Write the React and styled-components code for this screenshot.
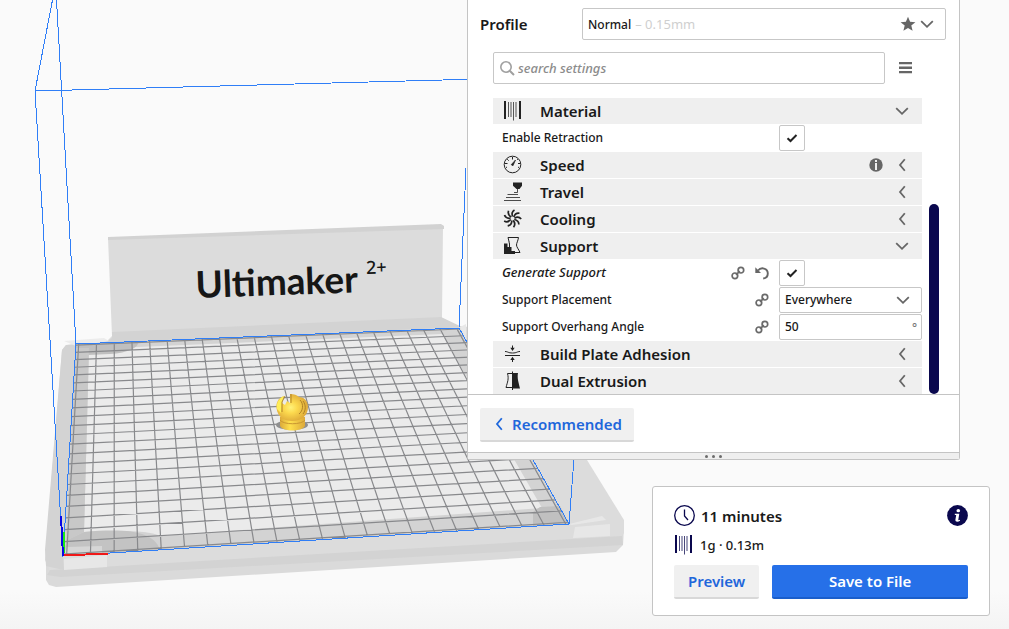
import React from "react";
import styled, { createGlobalStyle } from "styled-components";

const Global = createGlobalStyle`
  * { box-sizing: border-box; }
  html, body, #root { height: 100%; }
  body {
    margin: 0;
    font-family: "Noto Sans", "Open Sans", sans-serif;
    font-size: 12px;
    font-weight: 500;
    color: #191919;
  }
  button, input, select { font: inherit; color: inherit; margin: 0; }
`;

const Page = styled.main`
  position: relative;
  min-height: 100%;
  overflow: hidden;
  background: linear-gradient(#fafafa 0%, #fafafa 94%, #f4f4f4 100%);
`;

const SceneSvg = styled.svg`
  position: absolute;
  inset: 0;
  width: 100%;
  height: 100%;
`;

const Overlay = styled.div`
  position: relative;
  display: flex;
  flex-direction: column;
  align-items: flex-end;
  gap: 26px;
  padding: 0 19px 13px 0;
`;

const Panel = styled.section`
  width: 493px;
  max-width: 100%;
  margin-right: 30px;
  background: #fff;
  border: 1px solid #c4c4c4;
  border-top: 0;
  border-radius: 0 0 3px 3px;
`;

const ProfileRow = styled.div`
  display: flex;
  align-items: center;
  padding: 8px 13px 0 12px;
  font-size: 15px;
  font-weight: 600;
`;

const ProfileLabel = styled.span`
  width: 102px;
`;

const ProfileButton = styled.button`
  flex: 1;
  height: 32px;
  display: flex;
  align-items: center;
  gap: 4px;
  padding: 0 11px 0 5px;
  border: 1px solid #c7c7c7;
  border-radius: 2px;
  background: #fff;
  font-size: 12px;
  font-weight: 500;
`;

const Faint = styled.span`
  flex: 1;
  text-align: left;
  font-size: 13px;
  font-weight: 400;
  color: #cfcfcf;
`;

const SearchRow = styled.div`
  display: flex;
  align-items: center;
  gap: 14px;
  padding: 12px 47px 14px 25px;
`;

const SearchBox = styled.label`
  flex: 1;
  height: 32px;
  display: flex;
  align-items: center;
  gap: 3px;
  padding: 0 5px;
  border: 1px solid #c7c7c7;
  border-radius: 2px;
`;

const SearchInput = styled.input`
  flex: 1;
  min-width: 0;
  border: 0;
  padding: 0;
  outline: 0;
  background: none;
  font-size: 13px;
  font-style: italic;
  &::placeholder { color: #8c8c8c; opacity: 1; }
`;

const IconButton = styled.button`
  display: flex;
  padding: 0;
  border: 0;
  background: none;
`;

const ListArea = styled.div`
  display: flex;
  padding: 0 20px 0 25px;
  gap: 7px;
  border-bottom: 1px solid #c4c4c4;
`;

const Settings = styled.div`
  flex: 1;
  display: flex;
  flex-direction: column;
  gap: 1px;
`;

const ScrollThumb = styled.div`
  width: 10px;
  height: 190px;
  align-self: flex-end;
  border-radius: 5px;
  background: #0a084e;
`;

const CategoryButton = styled.button`
  height: 26px;
  display: flex;
  align-items: center;
  padding: 0 13px 0 10px;
  border: 0;
  background: #efefef;
  font-size: 15px;
  font-weight: 600;
  text-align: left;
`;

const CategoryIcon = styled.span`
  display: flex;
  width: 37px;
`;

const CategoryName = styled.span`
  flex: 1;
`;

const InfoMark = styled.span`
  display: flex;
  margin-right: 12px;
`;

const SettingRow = styled.div`
  height: 26px;
  display: flex;
  align-items: center;
  gap: 10px;
  padding-left: 9px;
`;

const SettingLabel = styled.label`
  flex: 1;
  padding-bottom: 2px;
  font-size: ${(p) => (p.$changed ? "13px" : "12px")};
  font-style: ${(p) => (p.$changed ? "italic" : "normal")};
`;

const Field = styled.span`
  width: 143px;
  height: 26px;
  display: grid;
  grid-template-columns: 1fr;
  align-items: center;
  > * { grid-area: 1 / 1; }
  > svg, > span { justify-self: end; margin-right: 12px; pointer-events: none; }
`;

const CheckField = styled(Field)`
  > svg { justify-self: start; margin: 0 0 0 6px; }
`;

const CheckInput = styled.input`
  appearance: none;
  width: 26px;
  height: 26px;
  border: 1px solid #c7c7c7;
  border-radius: 2px;
  background: #fff;
`;

const SelectInput = styled.select`
  appearance: none;
  width: 100%;
  height: 26px;
  padding: 0 5px 1px;
  border: 1px solid #c7c7c7;
  border-radius: 2px;
  background: #fff;
`;

const TextInput = styled.input`
  width: 100%;
  height: 26px;
  padding: 0 5px 2px;
  border: 1px solid #c7c7c7;
  border-radius: 2px;
  background: #fff;
`;

const Unit = styled.span`
  && { margin-right: 5px; }
  color: #777;
`;

const PanelFooter = styled.div`
  padding: 13px 12px 10px;
`;

const ActionButton = styled.button`
  height: 34px;
  display: flex;
  align-items: center;
  justify-content: center;
  gap: 6px;
  flex: ${(p) => (p.$grow ? "1" : "none")};
  padding: 0 ${(p) => (p.$icon ? "12px" : "14px")};
  border: 0;
  border-bottom: 2px solid ${(p) => (p.$primary ? "#1a5ecb" : "#d8d8d8")};
  border-radius: 2px;
  background: ${(p) => (p.$primary ? "#2670e8" : "#f0f0f0")};
  color: ${(p) => (p.$primary ? "#fff" : "#1f67db")};
  font-size: 15px;
  font-weight: 600;
`;

const DragHandle = styled.div`
  height: 7px;
  display: flex;
  align-items: center;
  justify-content: center;
  gap: 4px;
  border-top: 1px solid #c4c4c4;
  background: #efefef;
`;

const Dot = styled.i`
  width: 3px;
  height: 3px;
  border-radius: 50%;
  background: #6b6b6b;
`;

const JobCard = styled.section`
  width: 338px;
  max-width: 100%;
  height: 130px;
  padding: 18px 21px 0;
  border: 1px solid #c4c4c4;
  border-radius: 3px;
  background: #fff;
`;

const JobRow = styled.div`
  display: flex;
  align-items: center;
  gap: 6px;
  height: ${(p) => (p.$big ? "21px" : "20px")};
  margin-bottom: ${(p) => (p.$big ? "9px" : "10px")};
  font-size: ${(p) => (p.$big ? "15px" : "13px")};
  font-weight: ${(p) => (p.$big ? "600" : "500")};
`;

const JobText = styled.span`
  flex: 1;
`;

const Actions = styled.div`
  display: flex;
  gap: 13px;
`;

/* ---------- icons ---------- */

const Chevron = ({ dir = "down", color = "#666" }) => (
  <svg width="14" height="14" viewBox="0 0 14 14" fill="none" stroke={color} strokeWidth="1.8">
    <path d={dir === "down" ? "M1.2 4.2 7 9.8l5.8-5.6" : "M9.8 1.2 5 7l4.800 5.800"} />
  </svg>
);

const Star = () => (
  <svg width="16" height="16" viewBox="0 0 16 16" fill="#666">
    <path d="M8 .8l2.100 5 5.300.4-4.100 3.400 1.300 5.200L8 12l-4.600 2.800 1.300-5.200L.6 6.200l5.300-.4z" />
  </svg>
);

const SearchIcon = () => (
  <svg width="16" height="16" viewBox="0 0 16 16" fill="none" stroke="#a0a0a0" strokeWidth="1.600">
    <circle cx="7" cy="7" r="5.200" />
    <path d="M10.700 10.700 15 15" strokeWidth="2" />
  </svg>
);

const MenuIcon = () => (
  <svg width="13" height="12" viewBox="0 0 13 12" fill="#666">
    <path d="M0 0h13v2.300H0zM0 4.500h13v2.500H0zM0 9h13v2.300H0z" />
  </svg>
);

const MaterialIcon = ({ color = "#222" }) => (
  <svg width="20" height="20" viewBox="0 0 20 20" fill={color}>
    <path d="M1 0h2v18H1zM16 0h2v18h-2z" />
    <path d="M5 1h1v15H5zM7.500 1h1v15h-1zM10 1h1v18.500h-1zM12.500 1h1v15h-1z" opacity=".75" />
  </svg>
);

const SpeedIcon = () => (
  <svg width="20" height="20" viewBox="0 0 20 20" fill="none" stroke="#222">
    <circle cx="9.500" cy="9.500" r="8.300" />
    <path d="M9.500 2v2.500M4.200 4.200l1.500 1.500M14.800 4.200l-.8.8M2 8.500h2.500M17 8.500h-2M3 12.500l1-.4M16 12.500l-1-.4" />
    <path d="M12.500 5 8.200 9.700l1.800 1z" fill="#222" strokeWidth=".7" />
  </svg>
);

const TravelIcon = () => (
  <svg width="20" height="20" viewBox="0 0 20 20" fill="none" stroke="#222">
    <path d="M10 .5h9v3.200L16.500 7h-3L10 3.700z" fill="#222" stroke="none" />
    <path d="M14.500 7v3.500H11M4.500 12.500H15M3 15.500h14M1 18.500h17" strokeOpacity=".8" />
  </svg>
);

const CoolingIcon = () => (
  <svg width="20" height="20" viewBox="0 0 20 20" fill="none" stroke="#222" strokeWidth="1.700">
    {[0, 40, 80, 120, 160, 200, 240, 280, 320].map((a) => (
      <path key={a} d="M9.500 7.500C8.600 5 9 2.500 11.500 1" transform={`rotate(${a} 9.500 9.500)`} />
    ))}
  </svg>
);

const SupportIcon = () => (
  <svg width="20" height="20" viewBox="0 0 20 20">
    <path d="M1 7.500h3.500v3.500h4v4H12v3H1z" fill="#222" />
    <path d="M12 16.500h5C15.500 13 13.500 11 13.500 9s1.500-4 2-7.500H5C5.300 4 6.500 6 6.500 8v3" fill="none" stroke="#222" />
  </svg>
);

const AdhesionIcon = () => (
  <svg width="20" height="20" viewBox="0 0 20 20" fill="none" stroke="#222">
    <path d="M2 7.500c3 0 3 1.500 7.500 1.500S14 7.500 17 7.500M2 11.500h15M9.500 1.500v4M9.500 18v-3" />
    <path d="M7.300 3.800h4.400L9.500 7zM7.300 16h4.400L9.500 12.800z" fill="#222" stroke="none" />
  </svg>
);

const DualIcon = () => (
  <svg width="20" height="20" viewBox="0 0 20 20">
    <path d="M10 2h5c-1 5 .5 9 2 15.500h-7z" fill="#222" />
    <path d="M9.500.5v18.500M9 2.500H4.500C6 8 4.500 11 3 16.500h6" fill="none" stroke="#222" />
  </svg>
);

const LinkIcon = () => (
  <svg width="14" height="14" viewBox="0 0 14 14" fill="none" stroke="#6a6a6a" strokeWidth="1.700">
    <circle cx="3.900" cy="9.800" r="2.800" />
    <circle cx="9.900" cy="4.200" r="2.800" />
    <path d="M5 8.800 8.800 5.200" />
  </svg>
);

const UndoIcon = () => (
  <svg width="14" height="14" viewBox="0 0 14 14" fill="none" stroke="#666" strokeWidth="1.900">
    <path d="M3 4.500C6 .8 12.800 2 12.800 7.500c0 2.700-2 4.700-4.600 5" />
    <path d="M.3 1.200V7H6z" fill="#666" stroke="none" />
  </svg>
);

const CheckIcon = () => (
  <svg width="14" height="14" viewBox="0 0 14 14" fill="none" stroke="#222" strokeWidth="2">
    <path d="M2.500 7.200 5.500 10l6-6" />
  </svg>
);

const InfoIcon = () => (
  <svg width="14" height="14" viewBox="0 0 14 14">
    <circle cx="7" cy="7" r="6.700" fill="#666" />
    <path d="M6 2h2v2H6zM6 5h2v7H6z" fill="#efefef" />
  </svg>
);

const DetailsIcon = () => (
  <svg width="21" height="21" viewBox="0 0 21 21">
    <circle cx="10.500" cy="10.500" r="10.400" fill="#0a084e" />
    <ellipse cx="11.300" cy="5.700" rx="1.800" ry="1.600" fill="#fff" />
    <path d="M7.800 8.700h4.500l-1 6c0 .7.800.5 1.700 0v1c-2 1.500-5 1.300-4.600-1l.8-4.800H7.800z" fill="#fff" />
  </svg>
);

const ClockIcon = () => (
  <svg width="21" height="21" viewBox="0 0 21 21" fill="none" stroke="#0a084e" strokeWidth="1.300">
    <circle cx="10.500" cy="10.500" r="9.800" />
    <path d="M10.500 4.500V11l3.500 4" />
  </svg>
);

/* ---------- 3D view ---------- */

const plate = { bl: [76, 344], br: [459, 328], fr: [569, 524], fl: [63, 556] };

/* Maps a point of the unit square onto the build plate as seen by the camera. */
function project(u, v) {
  const { bl: p0, br: p1, fr: p2, fl: p3 } = plate;
  const dx1 = p1[0] - p2[0], dx2 = p3[0] - p2[0], sx = p0[0] - p1[0] + p2[0] - p3[0];
  const dy1 = p1[1] - p2[1], dy2 = p3[1] - p2[1], sy = p0[1] - p1[1] + p2[1] - p3[1];
  const det = dx1 * dy2 - dx2 * dy1;
  const g = (sx * dy2 - dx2 * sy) / det;
  const h = (dx1 * sy - sx * dy1) / det;
  const w = g * u + h * v + 1;
  return [
    ((p1[0] - p0[0] + g * p1[0]) * u + (p3[0] - p0[0] + h * p3[0]) * v + p0[0]) / w,
    ((p1[1] - p0[1] + g * p1[1]) * u + (p3[1] - p0[1] + h * p3[1]) * v + p0[1]) / w,
  ];
}

const gridPath = Array.from({ length: 23 }, (_, i) => {
  const t = (1.5 + i * 10) / 223;
  const seg = (a, b) => `M${a.join(" ")}L${b.join(" ")}`;
  return seg(project(t, 0), project(t, 1)) + seg(project(0, t), project(1, t));
}).join("");

const Scene = () => (
  <SceneSvg viewBox="0 0 1009 629" preserveAspectRatio="xMinYMin slice" aria-label="3D view">
    <defs>
      <radialGradient id="gold" cx=".45" cy=".5" r=".6">
        <stop offset="0" stopColor="#fff27a" />
        <stop offset=".35" stopColor="#fcd94e" />
        <stop offset="1" stopColor="#d9a235" />
      </radialGradient>
      <linearGradient id="goldBase">
        <stop offset="0" stopColor="#dba93a" />
        <stop offset=".4" stopColor="#ffe04e" />
        <stop offset="1" stopColor="#dda93a" />
      </linearGradient>
    </defs>
    <path d="M46 562 624 528 623 545 616 552 56 587 49 585 46 580z" fill="#dadada" />
    <path d="M62 350 66 345 459 326 500 330 587 460 624 520V533L620 538 50 571 45 560z" fill="#dcdcdc" />
    <path d="M62 350 66 345 76 344 63 556 64 570 46 566 45 550z" fill="#d3d3d3" />
    <path d="M50 570 622 536 623 545 60 577 47 575z" fill="#d3d3d3" />
    <path d="M108 238 441 225 443 226 442 318 460 327 76 344 107 341 112 336z" fill="#dcdcdc" />
    <path d="M108 237 441 224 444 226V229L108 240z" fill="#d2d2d2" />
    <path d="M112 332 441 317 462 327 100 343 108 341 112 338z" fill="#d3d3d3" />
    <path d="M64 341 104 338 109 341 76 346z" fill="#ececec" />
    <path d="M460 327 466 324V340z" fill="#e8e8e8" />
    <path d="M76 344 459 328 569 524 63 556z" fill="#d3d3d3" />
    <path d="M89 349 442 334 542 508 160 536 C150 531 130 530 84 532z" fill="#ebebeb" />
    <path d="M76 344 138 341C140 347 128 353 110 354L88 355V349L76 354z" fill="#bfbfbf" />
    <path d="M63 556 67 540 84 532C130 528 154 532 160 550z" fill="#c3c3c3" />
    <path d="M533 512 540 507 560 506 569 524 533 526z" fill="#c0c0c0" />
    <path d="M76 348 89 348 84 532 66 541z" fill="#c8c8c8" />
    <path d="M64 559 107 555V567L64 570zM575 527 610 524V536L573 538zM569 524 602 516 606 520 572 525z" fill="#e7e7e7" />
    <path d="M66 547 102 546V553L64 555z" fill="#d6d6d6" />
    <path d={gridPath} fill="none" stroke="#88898c" strokeWidth="1.200" />
    <g fill="none" stroke="#2f7ef7" shapeRendering="crispEdges">
      <path d="M76 344 459 328 569 524 63 556z" />
      <path d="M56.500 0 76 344M52.500 0 35 91 63 556M35 91 480 79M466 168 459 328M580 380 569 524" />
    </g>
    <g fill="none" strokeWidth="2" shapeRendering="crispEdges">
      <path d="M64 555 108 554" stroke="#f01818" />
      <path d="M64 553V532" stroke="#16e816" />
      <path d="M63 556 61 516" stroke="#0808e8" />
    </g>
    <g transform="rotate(-2 195 298)" fill="#161616">
      <text x="196" y="298" fontFamily="Lato, sans-serif" fontSize="37" fontWeight="700">Ultimaker</text>
      <text x="367" y="280" fontFamily="Noto Sans, sans-serif" fontSize="18">2+</text>
    </g>
    <ellipse cx="292" cy="425" rx="16" ry="5" fill="#8f8f8f" />
    <path d="M280 417v9c3 6 22 6 25 0v-9z" fill="url(#goldBase)" />
    <path d="M280 420c3 5 22 5 25 0" fill="none" stroke="#c99632" />
    <path d="M284 396C278 398 276 403 276.500 408 277.500 417 284 421 292 421 302 421 308 415 308 407 308 401 304 397 299 397 297 395 294 394 290 394V403L287 401 285 405 282 403z" fill="url(#gold)" />
    <path d="M284 396C279 398 276 403 277 409L281 413 282 402z" fill="#ffee58" />
    <path d="M285 396 282 402V412M291 394V403M300 400C304 404 303 411 299 414M303 401C306 405 306 410 303 414" fill="none" stroke="#a87c25" strokeWidth=".9" />
  </SceneSvg>
);

/* ---------- page ---------- */

const Category = ({ icon, name, open, info }) => (
  <CategoryButton type="button" aria-expanded={!!open}>
    <CategoryIcon>{icon}</CategoryIcon>
    <CategoryName>{name}</CategoryName>
    {info && <InfoMark><InfoIcon /></InfoMark>}
    <Chevron dir={open ? "down" : "left"} />
  </CategoryButton>
);

const Check = ({ id }) => (
  <CheckField>
    <CheckInput id={id} type="checkbox" defaultChecked />
    <CheckIcon />
  </CheckField>
);

export default function App() {
  return (
    <>
      <Global />
      <Page>
        <Scene />
        <Overlay>
          <Panel>
            <ProfileRow>
              <ProfileLabel id="profile-label">Profile</ProfileLabel>
              <ProfileButton type="button" aria-labelledby="profile-label">
                Normal <Faint>– 0.15mm</Faint>
                <Star />
                <Chevron />
              </ProfileButton>
            </ProfileRow>
            <SearchRow>
              <SearchBox>
                <SearchIcon />
                <SearchInput type="text" placeholder="search settings" aria-label="search settings" />
              </SearchBox>
              <IconButton type="button" aria-label="Menu"><MenuIcon /></IconButton>
            </SearchRow>
            <ListArea>
              <Settings>
                <Category icon={<MaterialIcon />} name="Material" open />
                <SettingRow>
                  <SettingLabel htmlFor="retraction">Enable Retraction</SettingLabel>
                  <Check id="retraction" />
                </SettingRow>
                <Category icon={<SpeedIcon />} name="Speed" info />
                <Category icon={<TravelIcon />} name="Travel" />
                <Category icon={<CoolingIcon />} name="Cooling" />
                <Category icon={<SupportIcon />} name="Support" open />
                <SettingRow>
                  <SettingLabel htmlFor="support" $changed>Generate Support</SettingLabel>
                  <LinkIcon />
                  <IconButton type="button" aria-label="Reset"><UndoIcon /></IconButton>
                  <Check id="support" />
                </SettingRow>
                <SettingRow>
                  <SettingLabel htmlFor="placement">Support Placement</SettingLabel>
                  <LinkIcon />
                  <Field>
                    <SelectInput id="placement" defaultValue="Everywhere">
                      <option>Everywhere</option>
                    </SelectInput>
                    <Chevron />
                  </Field>
                </SettingRow>
                <SettingRow>
                  <SettingLabel htmlFor="angle">Support Overhang Angle</SettingLabel>
                  <LinkIcon />
                  <Field>
                    <TextInput id="angle" type="text" defaultValue="50" />
                    <Unit>°</Unit>
                  </Field>
                </SettingRow>
                <Category icon={<AdhesionIcon />} name="Build Plate Adhesion" />
                <Category icon={<DualIcon />} name="Dual Extrusion" />
              </Settings>
              <ScrollThumb />
            </ListArea>
            <PanelFooter>
              <ActionButton type="button" $icon>
                <Chevron dir="left" color="#1f67db" />
                Recommended
              </ActionButton>
            </PanelFooter>
            <DragHandle><Dot /><Dot /><Dot /></DragHandle>
          </Panel>
          <JobCard>
            <JobRow $big>
              <ClockIcon />
              <JobText>11 minutes</JobText>
              <IconButton type="button" aria-label="Details"><DetailsIcon /></IconButton>
            </JobRow>
            <JobRow>
              <MaterialIcon color="#0a084e" />
              <JobText>1g · 0.13m</JobText>
            </JobRow>
            <Actions>
              <ActionButton type="button">Preview</ActionButton>
              <ActionButton type="button" $primary $grow>Save to File</ActionButton>
            </Actions>
          </JobCard>
        </Overlay>
      </Page>
    </>
  );
}
